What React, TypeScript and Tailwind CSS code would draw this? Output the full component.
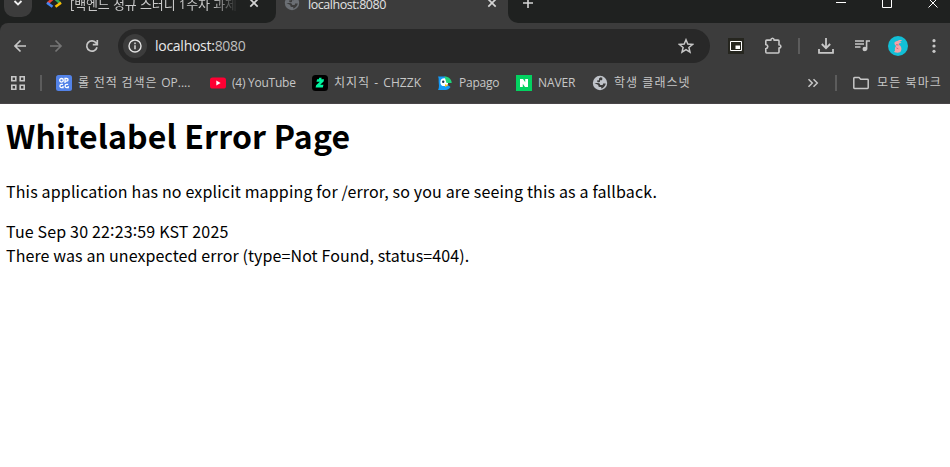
import type { ReactNode } from "react";

const ui = "font-['Open_Sans','Noto_Sans_CJK_KR',sans-serif]";

function Globe({ color, hole, className = "" }: { color: string; hole: string; className?: string }) {
  return (
    <svg className={"size-4 shrink-0 " + className} viewBox="0 0 16 16">
      <circle cx="8" cy="8" r="7.2" fill={color} />
      <path d="M2.400 8H6c1.300 0 2.200.9 2.200 2H10c.6 0 1-.4 1-1V8.500h2.800c-.2 1-.7 2-1.300 2.800-.8 1.100-2 2-3.300 2.300V12H7.500c-.7 0-1.200-.5-1.200-1.200v-.9zM8.500 2.300 10.300 2.800v1.400c0 .6-.4 1-1 1H8v1.300c0 .5-.4.800-.9.800H6L5 6.300V5.500h1.200c.5 0 .8-.3.800-.8V3.500z" fill={hole} />
    </svg>
  );
}

function Close({ className = "" }: { className?: string }) {
  return (
    <svg className={"size-2.5 shrink-0 " + className} viewBox="0 0 10 10" stroke="#d4d4d4" strokeWidth="1.7">
      <path d="m1.300 1.300 7.400 7.400m0-7.400-7.400 7.400" />
    </svg>
  );
}

function TabStrip() {
  return (
    <div className="flex h-[23px] w-full overflow-hidden text-xs leading-[18px]">
      <div className="flex h-[23px] w-[276px] shrink-0 items-start rounded-br-[10px] bg-[#1f2120]">
        <div className="ml-1 flex h-[17px] w-7 shrink-0 justify-center rounded-b-[10px] bg-[#3c3c3c]">
          <svg className="size-2.5" viewBox="0 0 10 10" fill="none" stroke="#f0f0f0" strokeWidth="1.8">
            <path d="m1.500 1 3.500 3.500L8.500 1" />
          </svg>
        </div>
        <svg className="ml-3.5 h-2.5 w-4 shrink-0" viewBox="0 0 16 10" strokeWidth="2.600" fill="none">
          <path d="M6.500-1 1.500 3.500" stroke="#ea4335" />
          <path d="m1 2.800 5.500 4" stroke="#4285f4" />
          <path d="m9.500-1 5 4.500" stroke="#34a853" />
          <path d="m15 2.800-5.500 4" stroke="#fbbc04" />
        </svg>
        <div className="-mt-[5px] ml-2 w-[169px] shrink-0 overflow-hidden whitespace-nowrap text-[13px] tracking-[-0.1px] text-[#c8c8c8] [mask-image:linear-gradient(to_right,black_142px,transparent_168px)]">
          [백엔드 정규 스터디 1주차 과제
        </div>
        <Close className="-mt-[2px] ml-2.5" />
      </div>
      <div className="flex w-[232px] shrink-0 items-start">
        <Globe color="#6b6f74" hole="#3c3c3c" className="-mt-[5px] ml-2" />
        <div className="-mt-1 ml-2 w-[170px] shrink-0 text-[12.5px] tracking-[-0.45px] text-[#e3e3e3]">localhost:8080</div>
        <Close className="-mt-[2px] ml-[9px]" />
      </div>
      <div className="flex flex-1 items-start rounded-bl-[10px] bg-[#1f2120]">
        <svg className="-mt-[3px] ml-3.5 size-3" viewBox="0 0 12 12" stroke="#d4d4d4" strokeWidth="1.600">
          <path d="M6 1v10M1 6h10" />
        </svg>
        <svg className="ml-auto mr-3 h-2.5 w-[102px]" viewBox="0 0 102 10" fill="none" stroke="#fff" strokeWidth="1">
          <path d="M0 2.500h10M46.500-2v9.500h9V-2M92.500-1.500l9 9m0-9-9 9" />
        </svg>
      </div>
    </div>
  );
}

function Toolbar() {
  return (
    <div className="bg-[#1f2120]">
      <div className="flex h-[46px] items-center rounded-tl-[8px] bg-[#3c3c3c]">
        <svg className="ml-3 size-4 shrink-0" viewBox="0 0 16 16" fill="none" stroke="#c7c7c7" strokeWidth="1.700">
          <path d="M14 8H3m5.500-5.500L3 8l5.500 5.500" />
        </svg>
        <svg className="ml-5 size-4 shrink-0" viewBox="0 0 16 16" fill="none" stroke="#757575" strokeWidth="1.700">
          <path d="M2 8h11M7.500 2.500 13 8l-5.500 5.500" />
        </svg>
        <svg className="ml-5 size-4 shrink-0" viewBox="0 0 16 16" fill="none" stroke="#c7c7c7" strokeWidth="1.700">
          <path d="M13 9.200A5.200 5.200 0 1 1 12.200 5L13.300 6.200M13.300 2v4.600H8.800" />
        </svg>
        <div className="ml-[18px] flex h-[34px] w-[592px] shrink-0 items-center rounded-full bg-[#282828]">
          <div className="ml-[5px] flex size-6 items-center justify-center rounded-full bg-[#3c3c3c]">
            <svg className="size-4" viewBox="0 0 16 16" fill="none" stroke="#e3e3e3" strokeWidth="1.400">
              <circle cx="8" cy="8" r="6" />
              <path d="M8 7.200v4M8 4.600v1.600" />
            </svg>
          </div>
          <div className="ml-2 text-sm tracking-[-0.27px] text-[#e8e8e8]">localhost:<span className="text-[#c0c0c0]">8080</span></div>
          <svg className="ml-auto mr-4 size-4" viewBox="0 0 16 16" fill="none" stroke="#c7c7c7" strokeWidth="1.500">
            <path d="m8 1.800 1.800 4.300 4.700.4-3.600 3 1.100 4.600L8 11.700l-4 2.400 1.100-4.600-3.600-3 4.700-.4z" />
          </svg>
        </div>
        <svg className="ml-[18px] size-4 shrink-0" viewBox="0 0 16 16">
          <path fill="#26261f" d="M0 0h16v16H0z" />
          <path d="M2.500 3.500h11v9h-11z" fill="none" stroke="#fff" />
          <path fill="#fff" d="M7.500 7.500h4.500v3.500H7.500z" />
        </svg>
        <svg className="ml-5 size-[18px] shrink-0" viewBox="0 0 18 18" fill="none" stroke="#c7c7c7" strokeWidth="1.600">
          <path d="M1.800 4q0-.9.900-.9h4.100q.2-1.800 1.700-1.800t1.700 1.800h3.900q.9 0 .9.900v3.700q1.900.2 1.900 1.700t-1.900 1.700v4q0 .9-.9.900H2.700q-.9 0-.9-.9v-3.400q2-.4 2-2.100t-2-2.100z" />
        </svg>
        <div className="ml-4 h-4 w-0.5 shrink-0 bg-[#5c5c5c]" />
        <svg className="ml-[18px] size-4 shrink-0" viewBox="0 0 16 16" fill="none" stroke="#c7c7c7" strokeWidth="1.800">
          <path d="M8 0v10M3.800 6 8 10.200 12.200 6M1 11v3.900h14V11" />
        </svg>
        <svg className="ml-5 h-4 w-[17px] shrink-0" viewBox="0 0 17 16" fill="none" stroke="#c7c7c7" strokeWidth="1.600">
          <path d="M1 3h9M1 6h9M1 9h5.500M12.600 11.500V3H16" />
          <circle cx="10.800" cy="11" r="2.300" fill="#c7c7c7" stroke="none" />
        </svg>
        <svg className="ml-[17px] size-5 shrink-0" viewBox="0 0 20 20">
          <circle cx="10" cy="10" r="10" fill="#12bfd6" />
          <path fill="#f4a3a8" d="M6.500 6.500C7.600 5.400 9 5.300 10.300 4.600 11.600 4 12.800 4 14 4.300c-.7.800-1.700 1.100-2.600 1.600.9 0 1.600.2 2.200.8-1 .5-2 .3-2.800.9l.4 1.300c1.600 1 2.300 2.400 2.200 4.100-.1 1.500-.6 2.600-1.500 3.300-1.700.5-3.500.4-5.300-.1l-.5-.9 1-.5c-.5-1.600-.1-3.300 1-4.700C6.900 9.200 6.200 8 6.500 6.500z" />
          <path d="m8 8.700 2.600.3m-2.200 2.900 1.900.9" stroke="#c95767" strokeWidth=".8" />
        </svg>
        <svg className="ml-[18px] size-4 shrink-0" viewBox="0 0 16 16" fill="#c7c7c7">
          <circle cx="8" cy="2.700" r="1.600" /><circle cx="8" cy="8" r="1.600" /><circle cx="8" cy="13.300" r="1.600" />
        </svg>
      </div>
    </div>
  );
}

function Bookmark({ icon, width, children }: { icon: ReactNode; width: string; children: ReactNode }) {
  return (
    <div className={"flex shrink-0 items-center gap-1.5 whitespace-nowrap " + width}>
      {icon}
      <span>{children}</span>
    </div>
  );
}

function BookmarksBar() {
  return (
    <div className="flex h-[35px] items-center border-b border-[#494548] pb-[7px] pl-[10px] text-xs tracking-[-0.25px] text-[#c7c7c7]">
      <svg className="size-4 shrink-0" viewBox="0 0 16 16" fill="none" stroke="#c7c7c7" strokeWidth="1.600">
        <path d="M1.800 1.800h4v4h-4zM10.200 1.800h4v4h-4zM1.800 10.200h4v4h-4zM10.200 10.200h4v4h-4z" />
      </svg>
      <div className="ml-[14px] mr-[14px] h-4 w-0.5 shrink-0 bg-[#5c5c5c]" />
      <Bookmark width="w-[154px]" icon={
        <svg className="size-4 shrink-0" viewBox="0 0 16 16" fill="none" stroke="#fff" strokeWidth="1.300">
          <rect width="16" height="16" rx="2.500" fill="#5383e8" stroke="none" />
          <circle cx="5.500" cy="5.300" r="1.800" /><path d="M9 7.900V3.500h1.700a1.300 1.300 0 0 1 0 2.700H9M7 9.400H5.500a1.500 1.500 0 0 0 0 3.200H7v-1.700M12.200 9.400h-1.500a1.500 1.500 0 0 0 0 3.200h1.500v-1.700" />
        </svg>}><span className="tracking-[0.85px]">롤 전적 검색은 </span><span className="tracking-[0px]">OP....</span></Bookmark>
      <Bookmark width="w-[102px]" icon={
        <svg className="size-4 shrink-0" viewBox="0 0 16 16">
          <rect y="2.500" width="16" height="11" rx="2.600" fill="#ff0033" /><path fill="#fff" d="m6.300 5.600 4.300 2.400-4.300 2.400z" />
        </svg>}>(4) YouTube</Bookmark>
      <Bookmark width="w-[125px]" icon={
        <svg className="size-4 shrink-0" viewBox="0 0 16 16">
          <rect width="16" height="16" rx="3.500" fill="#000" /><path fill="#00f5a0" d="M7.200 2.800h2.500l-.5 1.500H12L11.600 6.500 8.200 9.800h3.300l-.7 2.700H3.600l.5-2.300L7.800 6.700H4.500l.6-2.400h1.700z" />
        </svg>}><span className="tracking-[1px]">치지직 - </span><span className="tracking-[0.100px]">CHZZK</span></Bookmark>
      <Bookmark width="w-[79px]" icon={
        <svg className="size-4 shrink-0" viewBox="0 0 16 16">
          <path fill="#159bf8" d="M1 1.500h7l2 2.500v10l-2 1H1c.9-1.400 1.200-3.600.8-6.200C1.400 5.500 2.200 3.500 1 1.500z" />
          <circle cx="7.300" cy="7.200" r="3.900" fill="#fff" />
          <path fill="#20d47b" d="M7.500 1.500c4 0 7 2.500 7.200 6.500H9.500z" /><path fill="#ffc31f" d="m8 9 3.500 1.500L8 12.200z" /><path fill="#159bf8" d="m11.500 10.500 2 1.500c-1.300 2-3 3-5.500 3v-3z" /><circle cx="6.200" cy="6.800" r="1.200" fill="#163250" />
        </svg>}>Papago</Bookmark>
      <Bookmark width="w-[76px]" icon={
        <svg className="size-4 shrink-0" viewBox="0 0 16 16">
          <path fill="#03d261" d="M0 0h16v16H0z" /><path fill="#fff" d="M4 4h3l2.200 3.300V4H12v8H9L6.800 8.700V12H4z" />
        </svg>}><span className="tracking-[-0.1px]">NAVER</span></Bookmark>
      <Bookmark width="w-[110px]" icon={<Globe color="#bfc3c9" hole="#3c3c3c" />}><span className="tracking-[1.050px]">학생 클래스넷</span></Bookmark>
      <svg className="ml-auto size-3 shrink-0" viewBox="0 0 12 12" fill="none" stroke="#c7c7c7" strokeWidth="1.500">
        <path d="m1.500 2.200 3.800 3.800-3.800 3.800M6.500 2.200 10.300 6 6.500 9.800" />
      </svg>
      <div className="ml-4 h-4 w-0.5 shrink-0 bg-[#5c5c5c]" />
      <svg className="ml-4 size-4 shrink-0" viewBox="0 0 16 16" fill="none" stroke="#c7c7c7" strokeWidth="1.500">
        <path d="M.8 3.200q0-.7.700-.7H6l1.700 1.700h6.800q.7 0 .7.700v7.900q0 .7-.7.700h-13q-.7 0-.7-.7z" />
      </svg>
      <span className="ml-2 mr-[9px] w-16 shrink-0 whitespace-nowrap tracking-[1.100px]">모든 북마크</span>
    </div>
  );
}

export default function App() {
  return (
    <div className="h-[467px] w-[950px] overflow-hidden bg-white">
      <header className={"h-[104px] bg-[#3c3c3c] " + ui}>
        <TabStrip />
        <Toolbar />
        <BookmarksBar />
      </header>
      <main className="pl-1.5 pt-1.5 font-['Noto_Sans_CJK_KR',sans-serif] text-base leading-6 tracking-[0.160px] text-black">
        <h1 className="text-[32px] font-bold leading-[50px]">Whitelabel Error Page</h1>
        <p className="mt-[19px] whitespace-nowrap">This application has no explicit mapping for /error, so you are seeing this as a fallback.</p>
        <div className="mt-4">Tue Sep 30 22<span className="align-[2px] leading-none">:</span>23<span className="align-[2px] leading-none">:</span>59 KST 2025</div>
        <div className="tracking-[0.100px]">There was an unexpected error (type=Not Found, status=404).</div>
      </main>
    </div>
  );
}
